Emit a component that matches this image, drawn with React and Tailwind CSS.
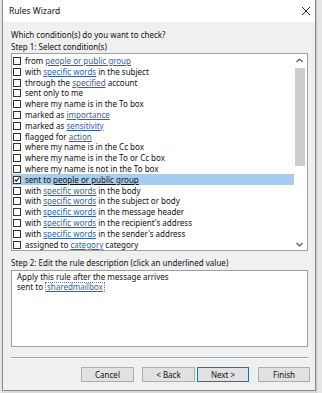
const rows = [
  ["from ", "people or public group", ""],
  ["with ", "specific words", " in the subject"],
  ["through the ", "specified", " account"],
  ["sent only to me", "", ""],
  ["where my name is in the To box", "", ""],
  ["marked as ", "importance", ""],
  ["marked as ", "sensitivity", ""],
  ["flagged for ", "action", ""],
  ["where my name is in the Cc box", "", ""],
  ["where my name is in the To or Cc box", "", ""],
  ["where my name is not in the To box", "", ""],
  ["sent to ", "people or public group", ""],
  ["with ", "specific words", " in the body"],
  ["with ", "specific words", " in the subject or body"],
  ["with ", "specific words", " in the message header"],
  ["with ", "specific words", " in the recipient's address"],
  ["with ", "specific words", " in the sender's address"],
  ["assigned to ", "category", " category"],
];

function Row({ row, selected }) {
  const [pre, link, post] = row;
  return (
    <div
      className={
        "h-[10.8px] flex items-center pl-[1px] " +
        (selected ? "bg-[#a6cdf0]" : "")
      }
    >
      <div className="w-[8px] h-[8px] border border-[#333] bg-white flex items-center justify-center shrink-0">
        {selected ? (
          <svg width="7" height="7" viewBox="0 0 7 7">
            <path d="M0.8 3.6 L2.6 5.4 L6.2 1.2" fill="none" stroke="#000" strokeWidth="1.2" />
          </svg>
        ) : null}
      </div>
      <div className="ml-[4px] whitespace-nowrap text-[#111]">
        {pre}
        {link ? (
          <span className={selected ? "underline text-[#111]" : "underline text-[#2f62ad]"}>
            {link}
          </span>
        ) : null}
        {post}
      </div>
    </div>
  );
}

function Btn({ label, w, primary }) {
  return (
    <div
      className={
        "h-[15px] flex items-center justify-center bg-[#e1e1e1] text-[#111] " +
        w +
        (primary ? " border-[1.5px] border-[#0078d7]" : " border border-[#adadad]")
      }
    >
      {label}
    </div>
  );
}

export default function App() {
  return (
    <div className="w-[322px] h-[393px] bg-[#dcdcdc] flex overflow-hidden font-['Segoe_UI','Noto_Sans',sans-serif] text-[8px] leading-[12px]">
      <div className="w-[2px] bg-[#e4e4e4] shrink-0" />
      <div className="w-[314px] h-[391px] border-l border-r border-b border-[#8a8a8a] bg-[#f0f0f0] flex flex-col shrink-0">
        <div className="h-[22px] bg-white flex items-center justify-between pl-[6px] pr-[4px]">
          <span className="text-[8.5px] text-[#111]">Rules Wizard</span>
          <svg width="10" height="10" viewBox="0 0 10 10">
            <path d="M1 1 L9 9 M9 1 L1 9" stroke="#222" strokeWidth="1" />
          </svg>
        </div>
        <div className="flex flex-col pl-[8px] pr-[7px] pt-[7px]">
          <div className="text-[#111]">Which condition(s) do you want to check?</div>
          <div className="text-[#111]">Step 1: Select condition(s)</div>
          <div className="h-[198px] border border-[#a0a0a0] bg-white flex">
            <div className="flex-1 pt-[1.6px] overflow-hidden">
              {rows.map((r, i) => (
                <Row key={i} row={r} selected={i === 11} />
              ))}
            </div>
            <div className="w-[13px] flex flex-col items-start shrink-0">
              <div className="w-[11px] h-[12px] flex items-center justify-center">
                <svg width="7" height="5" viewBox="0 0 7 5">
                  <path d="M0.5 4 L3.5 1 L6.5 4" fill="none" stroke="#555" strokeWidth="1.2" />
                </svg>
              </div>
              <div className="w-[10px] h-[98px] bg-[#cdcdcd] mt-[2px] ml-[0.5px]" />
              <div className="flex-1" />
              <div className="w-[11px] h-[12px] flex items-center justify-center">
                <svg width="7" height="5" viewBox="0 0 7 5">
                  <path d="M0.5 1 L3.5 4 L6.5 1" fill="none" stroke="#555" strokeWidth="1.2" />
                </svg>
              </div>
            </div>
          </div>
          <div className="mt-[6px] text-[#111]">Step 2: Edit the rule description (click an underlined value)</div>
          <div className="mt-[1px] h-[77px] border border-[#a0a0a0] bg-white pl-[5px] pt-[1px] leading-[10px] text-[#111]">
            <div>Apply this rule after the message arrives</div>
            <div className="flex items-center">
              <span>sent to</span>
              <span className="ml-[2px] px-[1px] border border-dotted border-[#6a7fa0] text-[#2f62ad] underline leading-[8px]">
                sharedmailbox
              </span>
            </div>
          </div>
          <div className="mt-[10px] h-[2px] border-t border-[#a0a0a0] border-b border-b-white" />
        </div>
        <div className="flex items-center mt-[8px] pl-[78px]">
          <Btn label="Cancel" w="w-[53px]" />
          <div className="w-[8px]" />
          <Btn label="< Back" w="w-[53px]" />
          <div className="w-[2px]" />
          <Btn label="Next >" w="w-[52px]" primary />
          <div className="w-[9px]" />
          <Btn label="Finish" w="w-[52px]" />
        </div>
      </div>
      <div className="flex-1 bg-[#e6e6e6] border-l border-[#c8c8c8]" />
    </div>
  );
}
